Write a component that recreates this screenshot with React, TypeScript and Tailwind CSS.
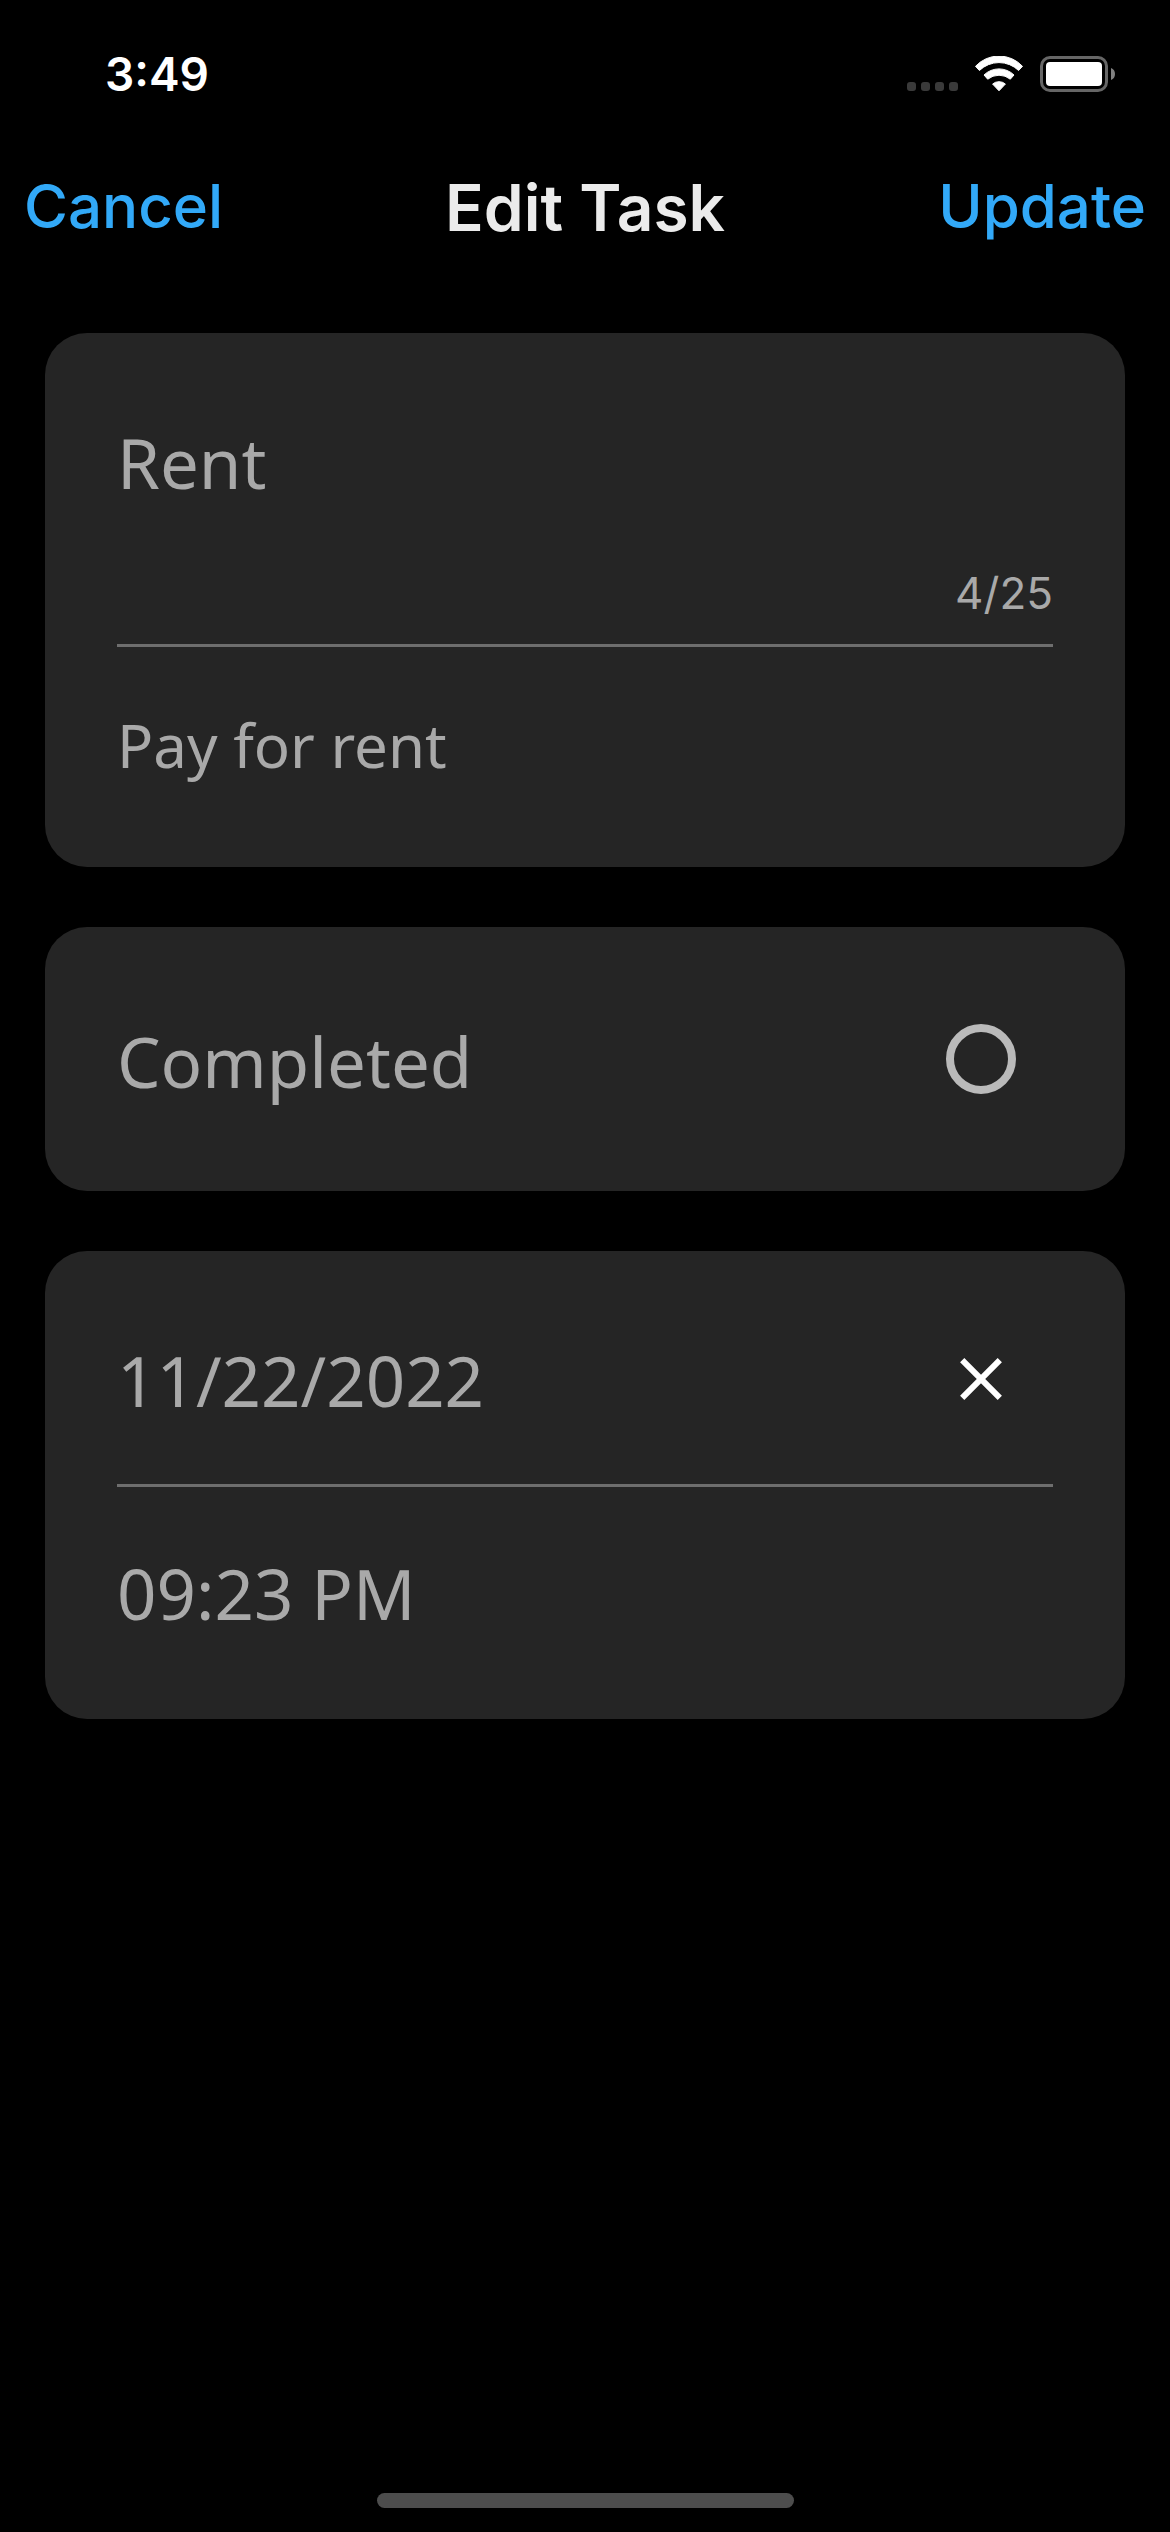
import { useState } from "react";
import type { ReactNode } from "react";

const TITLE_LIMIT = 25;

function CellularDots() {
  return (
    <svg width="51" height="10" viewBox="0 0 51 10" fill="#3a3a3a" aria-hidden="true">
      <rect x="0" width="9" height="9" rx="3" />
      <rect x="14" width="9" height="9" rx="3" />
      <rect x="28" width="9" height="9" rx="3" />
      <rect x="42" width="9" height="9" rx="3" />
    </svg>
  );
}

function WifiIcon() {
  return (
    <svg width="48" height="36" viewBox="0 0 48 36" fill="#fff" stroke="#fff" strokeWidth="1" strokeLinejoin="round" aria-hidden="true">
      <path d="M.5 10.3A32 32 0 0 1 47.500 10.3L43.6 14.500A28.2 28.2 0 0 0 4.4 14.500Z" />
      <path d="M9 19A21.5 21.5 0 0 1 39 19L35.3 23.2A18 18 0 0 0 12.7 23.2Z" />
      <path d="M17.6 28A10 10 0 0 1 30.4 28L24 34.800Z" />
    </svg>
  );
}

function BatteryIcon() {
  return (
    <svg width="75" height="36" viewBox="0 0 75 36" aria-hidden="true">
      <rect x="1.5" y="1.5" width="65" height="33" rx="8.5" fill="none" stroke="#666" strokeWidth="3" />
      <rect x="6" y="6" width="56" height="24" rx="4" fill="#fff" />
      <path d="M71 12Q75 13.500 75 18T71 24Z" fill="#808080" />
    </svg>
  );
}

function Card({ className, children }: { className: string; children: ReactNode }) {
  return <section className={`rounded-[42px] bg-[#252525] px-[72px] ${className}`}>{children}</section>;
}

export default function App() {
  const [title, setTitle] = useState("Rent");
  const [description, setDescription] = useState("Pay for rent");
  const [completed, setCompleted] = useState(false);
  const [date, setDate] = useState("11/22/2022");
  const [time, setTime] = useState("09:23 PM");

  return (
    <div className="flex min-h-screen flex-col bg-black font-['Inter',sans-serif]">
      <div className="flex items-center justify-between pt-[44px] pr-[55px] pl-[105px]">
        <span className="text-[46px] leading-[60px] font-semibold text-white">3:49</span>
        <div className="flex items-end gap-[17px]">
          <CellularDots />
          <WifiIcon />
          <BatteryIcon />
        </div>
      </div>

      <header className="mt-[58px] grid grid-cols-[1fr_auto_1fr] items-center px-6">
        <button type="button" className="justify-self-start text-[60px] leading-[84px] font-medium text-[#32a9f8]">
          Cancel
        </button>
        <h1 className="pt-1 text-[64px] leading-[84px] font-semibold text-[#ebebeb]">Edit Task</h1>
        <button type="button" className="justify-self-end text-[60px] leading-[84px] font-medium text-[#32a9f8]">
          Update
        </button>
      </header>

      <main className="mt-[83px] flex flex-1 flex-col gap-[60px] px-[45px] font-['Noto_Sans',sans-serif] text-[#a9a9a9]">
        <Card className="pt-[81px] pb-[80px]">
          <input
            aria-label="Title"
            maxLength={TITLE_LIMIT}
            value={title}
            onChange={(e) => setTitle(e.target.value)}
            className="block h-[96px] w-full bg-transparent text-[69px] leading-[96px] outline-none"
          />
          <p className="mt-[53px] text-right font-['Inter',sans-serif] text-[44px] leading-[60px]">
            {title.length}/{TITLE_LIMIT}
          </p>
          <hr className="mt-[21px] border-t-[3px] border-[#6e6e6e]" />
          <input
            aria-label="Description"
            value={description}
            onChange={(e) => setDescription(e.target.value)}
            className="mt-[56px] block h-[84px] w-full bg-transparent text-[60px] leading-[84px] outline-none"
          />
        </Card>

        <Card className="py-[82px]">
          <div className="flex items-center justify-between pr-[37px]">
            <label htmlFor="completed" className="pt-1 text-[69px] leading-[96px]">
              Completed
            </label>
            <input
              id="completed"
              type="checkbox"
              checked={completed}
              onChange={(e) => setCompleted(e.target.checked)}
              className="size-[70px] appearance-none rounded-full border-8 border-[#bababa] checked:bg-[#bababa]"
            />
          </div>
        </Card>

        <Card className="pt-[79px] pb-[78px]">
          <div className="flex items-center justify-between pr-[51px]">
            <input
              aria-label="Due date"
              value={date}
              onChange={(e) => setDate(e.target.value)}
              className="h-[98px] min-w-0 flex-1 bg-transparent pt-0.5 text-[69px] leading-[96px] outline-none"
            />
            <button type="button" aria-label="Clear due date" onClick={() => setDate("")}>
              <svg width="42" height="42" viewBox="0 0 42 42" stroke="#fff" strokeWidth="6" aria-hidden="true">
                <path d="M2.200 2.200 39.800 39.800M39.800 2.200 2.200 39.800" />
              </svg>
            </button>
          </div>
          <hr className="mt-[56px] border-t-[3px] border-[#6e6e6e]" />
          <input
            aria-label="Due time"
            value={time}
            onChange={(e) => setTime(e.target.value)}
            className="mt-[58px] block h-[96px] w-full bg-transparent text-[69px] leading-[96px] outline-none"
          />
        </Card>
      </main>

      <footer className="flex justify-center pb-6">
        <div className="h-[15px] w-[417px] rounded-full bg-[#4d4d4d]" />
      </footer>
    </div>
  );
}
